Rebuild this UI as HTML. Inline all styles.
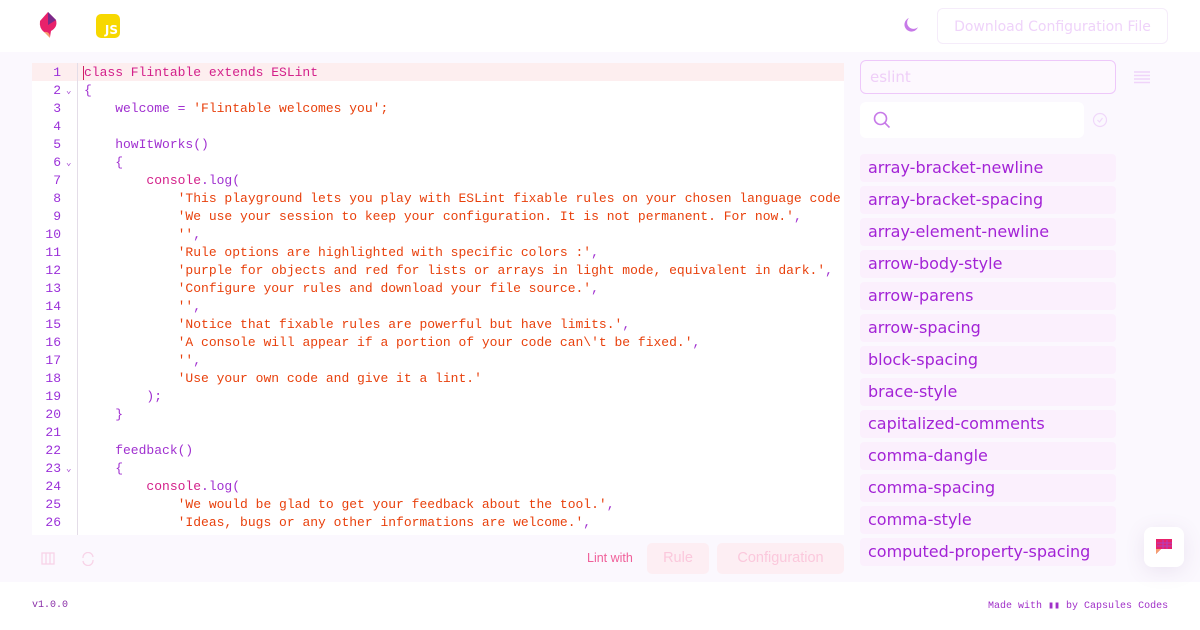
<!DOCTYPE html>
<html><head><style>
*{margin:0;padding:0;box-sizing:border-box}
body{width:1200px;height:630px;background:#fff;font-family:"DejaVu Sans","Liberation Sans",sans-serif;position:relative;overflow:hidden}
.main{position:absolute;left:0;top:52px;width:1200px;height:530px;background:#fbf8fe}
.editor{position:absolute;left:32px;top:63px;width:812px;height:472px;background:#fff;overflow:hidden;font-family:"Liberation Mono",monospace;font-size:13px}
.ln{position:absolute;left:0;width:45px;text-align:right;color:#9b30d9}
.gut{position:absolute;left:45px;top:0;width:1px;height:472px;background:#e4dde8}
.row{position:absolute;left:0;width:812px;height:18px;line-height:20px}
.code{position:absolute;left:52px;white-space:pre;color:#a030d0}
.s{color:#e8400c}.k{color:#d3208a}
.fold{position:absolute;left:34px;font-size:9px;color:#a040d0}
.rule{position:absolute;left:860px;width:256px;height:28px;background:#fbf0fd;border-radius:4px;color:#a323d6;font-size:16px;line-height:28px;padding-left:8px}
</style></head><body>
<svg style="position:absolute;left:36px;top:11px" width="24" height="30" viewBox="0 0 24 30"><path d="M12 1 L20 9 Q22 16 15 20 L14 26 Q10 22 8 21 Q3 17 4 10 Z" fill="#e8216b"/><path d="M12 1 L20 9 L12 14 Z" fill="#7a2a8a"/><path d="M8 21 Q14 20 14 27 Z" fill="#f4a070"/></svg>
<div style="position:absolute;left:96px;top:14px;width:24px;height:24px;background:#f7d800;border-radius:5px;color:#fff;font-weight:bold;font-size:12px;line-height:32px;text-align:right;padding-right:2px">JS</div>
<svg style="position:absolute;left:903px;top:17px" width="16" height="16" viewBox="0 0 16 16"><path d="M6 1 A7 7 0 1 0 15 10 A6 6 0 0 1 6 1Z" fill="#c77ae8"/></svg>
<div style="position:absolute;left:937px;top:8px;width:231px;height:36px;border:1px solid #f5ecfa;border-radius:6px;color:#efd3fa;font-size:14px;line-height:36px;text-align:center">Download Configuration File</div>
<div class="main"></div>
<div class="editor">
<div class="row" style="top:0;background:#fdeeef"></div>
<div class="gut"></div>
<div style="position:absolute;left:51px;top:3px;width:1px;height:14px;background:#d02060"></div>
<div id="rows"></div>
</div>
<script>
var L=[
['<span class="k">class Flintable extends ESLint</span>'],
['{',1],
['    welcome = <span class="s">\'Flintable welcomes you\';</span>'],
[''],
['    howItWorks()'],
['    {',1],
['        <span class="k">console</span>.log('],
['            <span class="s">\'This playground lets you play with ESLint fixable rules on your chosen language code</span>'],
['            <span class="s">\'We use your session to keep your configuration. It is not permanent. For now.\'</span>,'],
['            <span class="s">\'\'</span>,'],
['            <span class="s">\'Rule options are highlighted with specific colors :\'</span>,'],
['            <span class="s">\'purple for objects and red for lists or arrays in light mode, equivalent in dark.\'</span>,'],
['            <span class="s">\'Configure your rules and download your file source.\'</span>,'],
['            <span class="s">\'\'</span>,'],
['            <span class="s">\'Notice that fixable rules are powerful but have limits.\'</span>,'],
['            <span class="s">\'A console will appear if a portion of your code can\\\'t be fixed.\'</span>,'],
['            <span class="s">\'\'</span>,'],
['            <span class="s">\'Use your own code and give it a lint.\'</span>'],
['        );'],
['    }'],
[''],
['    feedback()'],
['    {',1],
['        <span class="k">console</span>.log('],
['            <span class="s">\'We would be glad to get your feedback about the tool.\'</span>,'],
['            <span class="s">\'Ideas, bugs or any other informations are welcome.\'</span>,']];
var h='';L.forEach(function(l,i){var t=i*18;h+='<div class="row" style="top:'+t+'px"><span class="ln" style="top:0;width:29px">'+(i+1)+'</span>'+(l[1]?'<span class="fold">⌄</span>':'')+'<span class="code">'+l[0]+'</span></div>';});
document.getElementById('rows').innerHTML=h;
</script>
<svg style="position:absolute;left:41px;top:552px" width="14" height="13"><rect x="1" y="1" width="12" height="11" fill="none" stroke="#f8d4e8" stroke-width="1.3"/><path d="M5 1v11M9 1v11" stroke="#f8d4e8" stroke-width="1.3"/></svg>
<svg style="position:absolute;left:81px;top:552px" width="14" height="14"><path d="M2 6A5 5 0 0 1 12 5M12 8A5 5 0 0 1 2 9" fill="none" stroke="#f8d4e8" stroke-width="1.3"/></svg>
<div style="position:absolute;left:587px;top:551px;font-size:12.5px;color:#f0609a;font-family:'Liberation Sans',sans-serif">Lint with</div>
<div style="position:absolute;left:647px;top:543px;width:62px;height:31px;background:#fdeef3;border-radius:5px;color:#fbc8dc;font-size:14.5px;line-height:31px;text-align:center;font-family:'Liberation Sans',sans-serif">Rule</div>
<div style="position:absolute;left:717px;top:543px;width:127px;height:31px;background:#fdeef3;border-radius:5px;color:#fbc8dc;font-size:14.5px;line-height:31px;text-align:center;font-family:'Liberation Sans',sans-serif">Configuration</div>
<div style="position:absolute;left:860px;top:60px;width:256px;height:34px;border:1px solid #eec8fa;border-radius:6px;background:#fdf8fe;color:#efcff8;font-size:15px;line-height:32px;padding-left:9px">eslint</div>
<svg style="position:absolute;left:1134px;top:71px" width="16" height="14"><path d="M0 1h16M0 4.5h16M0 8h16M0 11.5h16" stroke="#f0d4fa" stroke-width="1.5"/></svg>
<div style="position:absolute;left:860px;top:102px;width:224px;height:36px;background:#fff;border-radius:6px"></div>
<svg style="position:absolute;left:873px;top:111px" width="18" height="18"><circle cx="7.5" cy="7.5" r="6" fill="none" stroke="#c77ae8" stroke-width="1.6"/><path d="M12 12l4.5 4.5" stroke="#c77ae8" stroke-width="1.6"/></svg>
<svg style="position:absolute;left:1092px;top:112px" width="16" height="16"><circle cx="8" cy="8" r="6.5" fill="none" stroke="#f0d8fa" stroke-width="1.2"/><path d="M5.5 8l2 2 3-4" fill="none" stroke="#f0d8fa" stroke-width="1.2"/></svg>
<div class="rule" style="top:154px">array-bracket-newline</div>
<div class="rule" style="top:186px">array-bracket-spacing</div>
<div class="rule" style="top:218px">array-element-newline</div>
<div class="rule" style="top:250px">arrow-body-style</div>
<div class="rule" style="top:282px">arrow-parens</div>
<div class="rule" style="top:314px">arrow-spacing</div>
<div class="rule" style="top:346px">block-spacing</div>
<div class="rule" style="top:378px">brace-style</div>
<div class="rule" style="top:410px">capitalized-comments</div>
<div class="rule" style="top:442px">comma-dangle</div>
<div class="rule" style="top:474px">comma-spacing</div>
<div class="rule" style="top:506px">comma-style</div>
<div class="rule" style="top:538px">computed-property-spacing</div>
<div style="position:absolute;left:1144px;top:527px;width:40px;height:40px;background:#fff;border-radius:8px;box-shadow:0 4px 20px rgba(120,80,150,0.12)"></div>
<svg style="position:absolute;left:1153px;top:536px" width="22" height="22"><path d="M3 3h16v10H8l-5 5z" fill="#e8216b"/><path d="M3 13v5l5-5z" fill="#f4a070"/><path d="M10 4v9M14 4v9M4 7h15M4 10h15" stroke="#b040c0" stroke-width="1"/></svg>
<div style="position:absolute;left:32px;top:600px;font-family:'Liberation Mono',monospace;font-size:10px;color:#8a2fa8">v1.0.0</div>
<div style="position:absolute;left:988px;top:600px;font-family:'Liberation Mono',monospace;font-size:10px;color:#a030c8">Made with ▮▮ by Capsules Codes</div>
</body></html>
